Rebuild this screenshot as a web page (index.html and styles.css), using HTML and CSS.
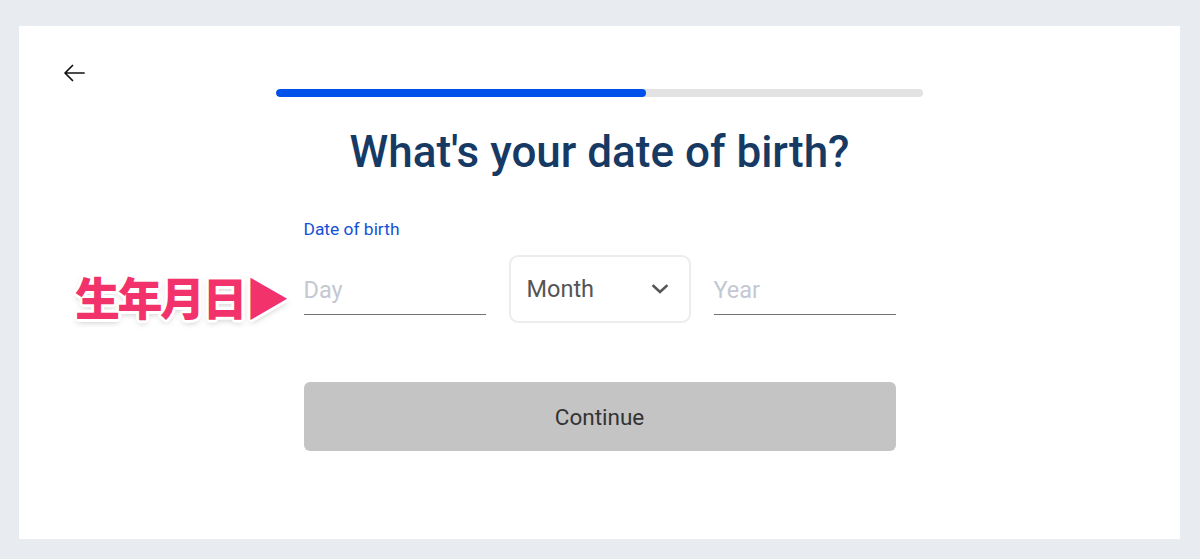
FILE: index.html
```html
<!DOCTYPE html>
<html lang="en">
<head>
<meta charset="utf-8">
<title>Date of birth</title>
<link rel="stylesheet" href="styles.css">
</head>
<body>
<main class="card">
  <button class="back" aria-label="Back">
    <svg width="24" height="24" viewBox="0 0 24 24" fill="none" stroke="#111" stroke-width="1.7" stroke-linecap="round" stroke-linejoin="round"><path d="M22 12H3.5M10.5 4.5L3 12l7.5 7.5"/></svg>
  </button>
  <div class="progress"><div class="progress-fill"></div></div>
  <h1 class="title">What's your date of birth?</h1>
  <form class="form">
    <label class="label">Date of birth</label>
    <div class="fields">
      <div class="annot">生年月日▶</div>
      <div class="field line"><span class="ph">Day</span></div>
      <div class="field select"><span class="sel-text">Month</span>
        <svg class="chev" width="18" height="12" viewBox="0 0 18 12" fill="none" stroke="#555" stroke-width="2.6" stroke-linecap="square"><path d="M2.5 3l6.5 6 6.5-6"/></svg>
      </div>
      <div class="field line"><span class="ph">Year</span></div>
    </div>
    <button type="button" class="continue">Continue</button>
  </form>
</main>
</body>
</html>
```
FILE: styles.css
```css
* { box-sizing: border-box; }
html, body { margin: 0; padding: 0; }
body {
  background: #e8ebf0;
  padding: 26px 20px 20px 19px;
  font-family: Roboto, "Noto Sans", sans-serif;
}
.card {
  background: #fff;
  height: 513px;
  padding: 35px 40px 0 43px;
  display: flex;
  flex-direction: column;
  align-items: center;
}
.back {
  align-self: flex-start;
  border: 0;
  background: none;
  padding: 0;
  width: 24px;
  height: 24px;
  display: flex;
}
.progress {
  width: 647px;
  height: 8px;
  background: #e2e2e2;
  border-radius: 4px;
  margin-top: 4px;
  margin-left: -3px;
  overflow: hidden;
}
.progress-fill {
  width: 370px;
  height: 100%;
  background: #0050ea;
  border-radius: 4px;
}
.title {
  margin: 25px 0 0 -3px;
  font-size: 44px;
  line-height: 60px;
  font-weight: 500;
  color: #163a63;
}
.form {
  width: 592px;
  margin-left: -3px;
  margin-top: 37px;
  display: flex;
  flex-direction: column;
}
.label {
  color: #1550d8;
  font-size: 17.4px;
  line-height: 20px;
}
.fields {
  position: relative;
  display: grid;
  grid-template-columns: repeat(3, minmax(0, 1fr));
  gap: 23px;
  margin-top: 16px;
  height: 68px;
}
.field {
  display: flex;
  align-items: center;
  font-size: 23.5px;
}
.line {
  border-bottom: 1.5px solid #707070;
  height: 60px;
  padding-top: 10px;
}
.ph { color: #c3c8d2; }
.select {
  border: 2px solid #ececec;
  border-radius: 9px;
  padding: 0 20px 0 16px;
  justify-content: space-between;
  color: #555;
}
.chev { display: block; }
.annot {
  position: absolute;
  right: calc(100% + 16px);
  top: 14px;
  white-space: nowrap;
  font-family: "Noto Sans CJK JP", sans-serif;
  font-weight: 900;
  font-size: 45px;
  line-height: 56px;
  letter-spacing: -2.5px;
  color: #f2336b;
  text-shadow:
    2px 0 0 #fff, -2px 0 0 #fff, 0 2px 0 #fff, 0 -2px 0 #fff,
    2px 2px 0 #fff, -2px -2px 0 #fff, 2px -2px 0 #fff, -2px 2px 0 #fff,
    3px 0 0 #fff, -3px 0 0 #fff, 0 3px 0 #fff, 0 -3px 0 #fff,
    0 3px 6px rgba(0,0,0,0.25);
}
.continue {
  margin-top: 59px;
  height: 69px;
  border: 0;
  border-radius: 6px;
  background: #c4c4c4;
  color: #333;
  font-family: Roboto, sans-serif;
  font-size: 22.5px;
}
```
